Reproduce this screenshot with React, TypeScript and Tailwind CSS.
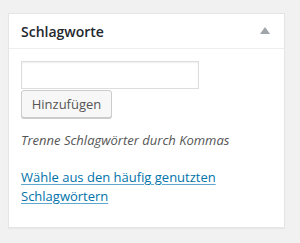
export default function App() {
  const font = { fontFamily: '"Open Sans", "Liberation Sans", sans-serif' };
  return (
    <div className="w-[300px] h-[243px] bg-[#f1f1f1] overflow-hidden pt-[13px]" style={font}>
      <div className="ml-[8px] w-[277px] bg-white border border-[#e5e5e5] shadow-[0_1px_1px_rgba(0,0,0,0.04)]">
        <div className="h-[35px] border-b border-[#eeeeee] flex items-center justify-between pl-[12px] pr-[14px]">
          <h3 className="text-[14px] font-semibold text-[#23282d] leading-[19px] m-0">Schlagworte</h3>
          <svg width="10" height="7" viewBox="0 0 10 7" className="mt-[-1px]">
            <path d="M5 0 L10 7 L0 7 Z" fill="#a0a5aa" />
          </svg>
        </div>
        <div className="px-[12px] pt-[12px] pb-[12px]">
          <div className="w-[178px] h-[28px] border border-[#dddddd] shadow-[inset_0_1px_2px_rgba(0,0,0,0.07)] bg-white" />
          <button className="mt-[1px] h-[28px] w-[91px] border border-[#cccccc] rounded-[3px] bg-[#f7f7f7] shadow-[0_1px_0_#cccccc] text-[13px] text-[#555555] leading-[26px] flex items-center justify-center">
            Hinzufügen
          </button>
          <p className="mt-[13px] text-[13px] italic text-[#555555] leading-[19px]">Trenne Schlagwörter durch Kommas</p>
          <a className="block mt-[18px] text-[13px] text-[#0073aa] underline decoration-[#5fa8cf] underline-offset-[2px] leading-[19px] w-[200px]">
            Wähle aus den häufig genutzten Schlagwörtern
          </a>
          <div className="h-[9px]" />
        </div>
      </div>
      <div className="mt-[20px] ml-[8px] w-[277px] h-[40px] bg-white border border-[#e5e5e5]" />
    </div>
  );
}
